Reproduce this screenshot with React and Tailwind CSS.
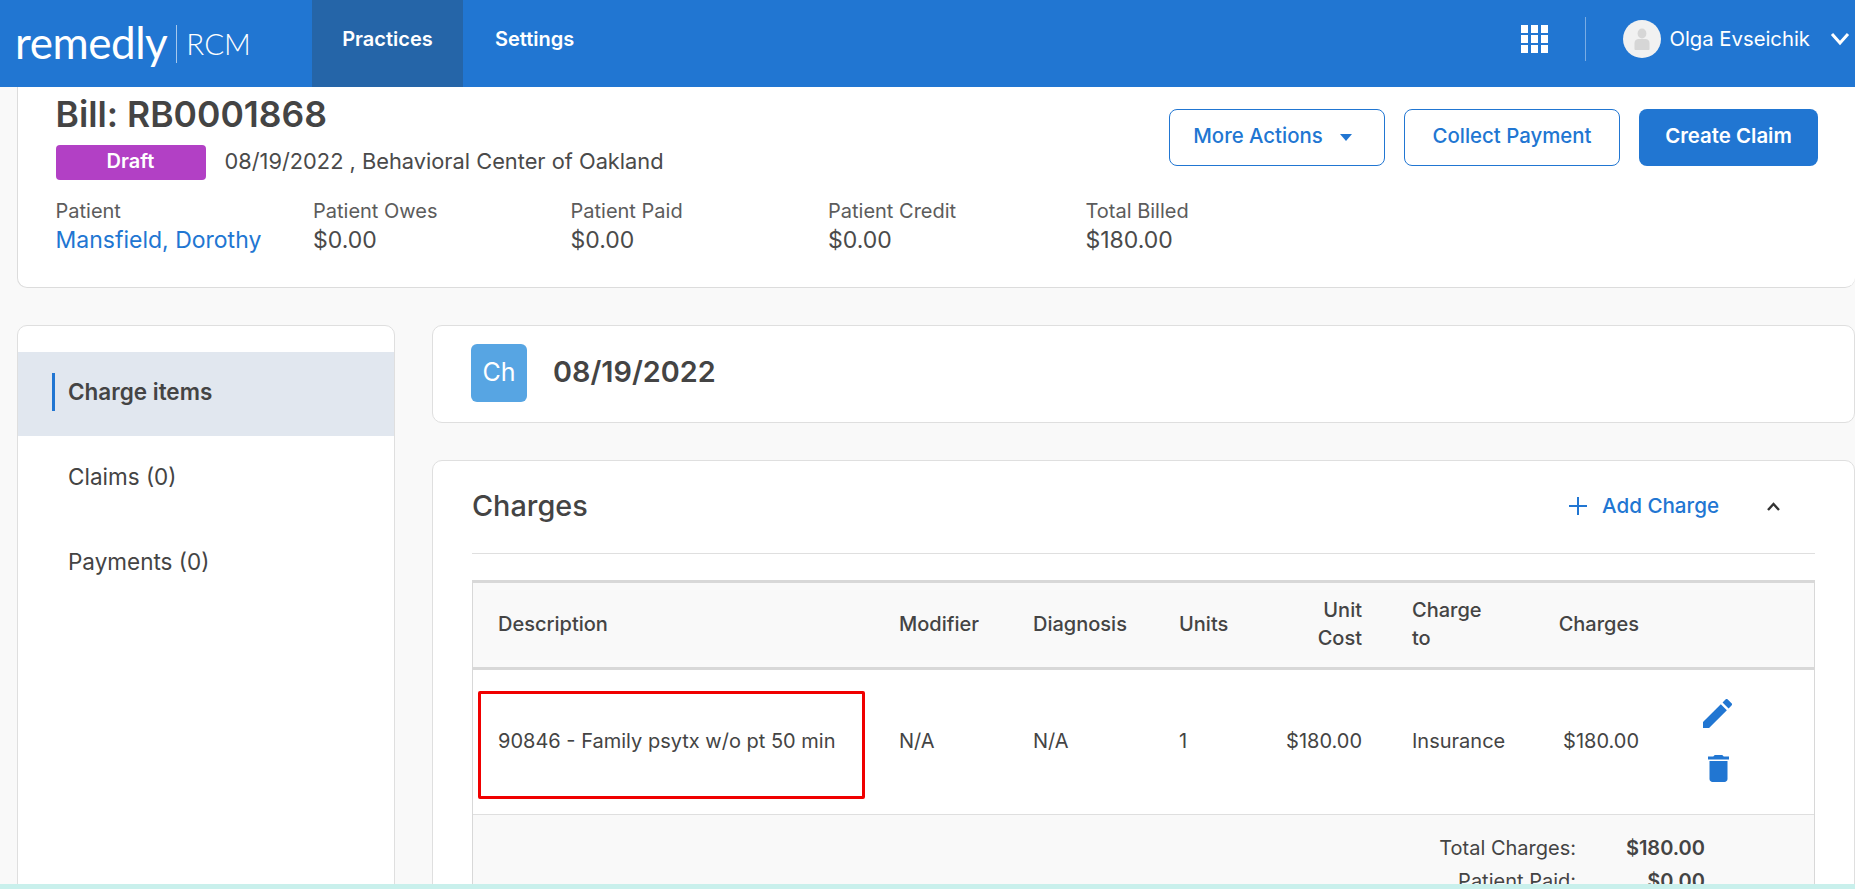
import React from "react";

const Summary = ({ label, value, link }) => (
  <div className="w-[257.5px]">
    <div className="text-[20px] leading-[30px] text-[#5c5c5c]">{label}</div>
    <div className={`text-[23px] leading-[29px] ${link ? "text-[#2176d2]" : "text-[#4a4a4a]"}`}>
      {value}
    </div>
  </div>
);

const rowGrid =
  "grid grid-cols-[401px_134px_146px_90px_93px_158px_119px_1fr] items-center pl-[25px] text-[20px] text-[#444]";

const App = () => {
  return (
    <div className="relative h-[889px] w-full overflow-hidden bg-[#f9f9f9] font-['Inter',sans-serif] text-[#444]">
      {/* top bar */}
      <header className="flex h-[87px] items-stretch bg-[#2176d2] text-white">
        <div className="flex w-[312px] items-center pl-[15px] font-['Lato',sans-serif]">
          <span className="pb-[3px] text-[44px] leading-none tracking-[-0.45px]">remedly</span>
          <span className="ml-[9px] h-[38px] w-px bg-white/60"></span>
          <span className="ml-[9px] text-[29.5px] font-light leading-none">RCM</span>
        </div>
        <div className="flex w-[151px] items-center justify-center bg-[#2565a8] pb-[9px] text-[20px] font-semibold">
          Practices
        </div>
        <div className="flex items-center pb-[9px] pl-[32px] text-[20px] font-semibold">Settings</div>
        <div className="ml-auto flex items-center pb-[9px]">
          <div className="grid grid-cols-3 gap-[2.5px]">
            {[...Array(9)].map((_, i) => (
              <span key={i} className="h-[7.5px] w-[7.5px] bg-white"></span>
            ))}
          </div>
          <span className="ml-[37px] h-[44px] w-px bg-white/40"></span>
          <div className="ml-[37px] flex h-[38px] w-[38px] items-center justify-center rounded-full bg-[#f1f1f1]">
            <svg width="16" height="22" viewBox="0 0 16 22" fill="#d6d6d6">
              <ellipse cx="8" cy="5.500" rx="4.400" ry="5" />
              <path d="M0.500 21v-6c0-2.600 2-4 4-4h7c2 0 4 1.400 4 4v6c0 .6-.4 1-1 1h-13c-.6 0-1-.4-1-1z" />
            </svg>
          </div>
          <span className="ml-[8px] mr-[2px] text-[20.3px]">Olga Evseichik</span>
          <svg className="ml-[18px] mr-[5px]" width="20" height="14" viewBox="0 0 20 14" fill="none" stroke="#fff" strokeWidth="3">
            <path d="M2 2l8 9 8-9" />
          </svg>
        </div>
      </header>

      {/* bill summary */}
      <section className="relative ml-[17px] h-[201px] rounded-b-[10px] border-b border-l border-[#dcdcdc] bg-white pl-[37.5px]">
        <div className="flex justify-between pr-[37px]">
          <div>
            <h1 className="pt-[6px] text-[35.500px] font-semibold leading-[44px] text-[#444]">Bill: RB0001868</h1>
            <div className="mt-[8px] flex items-center">
              <span className="flex h-[35px] w-[150px] items-center justify-center rounded-[4px] bg-[#b240c5] pb-[3px] text-[20px] font-semibold text-white">
                Draft
              </span>
              <span className="ml-[19px] pb-[2px] text-[21.8px] text-[#4a4a4a]">08/19/2022 , Behavioral Center of Oakland</span>
            </div>
          </div>
          <div className="flex gap-[19px] pt-[22px]">
            <button className="flex h-[57px] w-[216px] items-center justify-center rounded-[8px] border border-[#2176d2] bg-white pb-[3px] pr-[9px] text-[20.4px] font-medium text-[#2176d2]">
              More Actions
              <svg className="ml-[17px] mt-[3px]" width="12" height="7" viewBox="0 0 12 7" fill="#2176d2">
                <path d="M0 0h12L6 7z" />
              </svg>
            </button>
            <button className="h-[57px] w-[216px] rounded-[8px] border border-[#2176d2] bg-white pb-[3px] text-[20.4px] font-medium text-[#2176d2]">
              Collect Payment
            </button>
            <button className="h-[57px] w-[179px] rounded-[8px] bg-[#2176d2] pb-[3px] text-[20.4px] font-semibold text-white">
              Create Claim
            </button>
          </div>
        </div>
        <div className="mt-[16px] flex">
          <Summary label="Patient" value="Mansfield, Dorothy" link />
          <Summary label="Patient Owes" value="$0.00" />
          <Summary label="Patient Paid" value="$0.00" />
          <Summary label="Patient Credit" value="$0.00" />
          <Summary label="Total Billed" value="$180.00" />
        </div>
      </section>

      <div className="ml-[17px] mt-[37px] flex items-start gap-[37px]">
        {/* side menu */}
        <nav className="h-[620px] w-[378px] shrink-0 rounded-t-[10px] border border-[#dfdfdf] bg-white pt-[26px] text-[22.5px] text-[#444]">
          <div className="flex h-[84px] items-center bg-[#e1e7ef] pb-[4px] pl-[34px] font-semibold text-[#444]">
            <span className="h-[38px] w-[3px] bg-[#2176d2]"></span>
            <span className="ml-[13px]">Charge items</span>
          </div>
          <div className="flex h-[85px] items-center pb-[4px] pl-[50px]">Claims (0)</div>
          <div className="flex h-[85px] items-center pb-[4px] pl-[50px]">Payments (0)</div>
        </nav>

        <main className="min-w-0 flex-1">
          <div className="flex h-[98px] items-center rounded-[10px] border border-[#dfdfdf] bg-white pb-[2px] pl-[38px]">
            <span className="flex h-[58px] w-[56px] items-center justify-center rounded-[6px] bg-[#57a5e3] text-[25px] text-white">
              Ch
            </span>
            <span className="mb-[2px] ml-[26px] text-[28.8px] font-semibold text-[#444]">08/19/2022</span>
          </div>

          <div className="mt-[37px] rounded-t-[10px] border border-[#dfdfdf] bg-white pl-[39px] pr-[39px]">
            <div className="flex h-[93px] items-center border-b border-[#dfdfdf]">
              <h2 className="mb-[2px] text-[28.8px] font-medium text-[#444]">Charges</h2>
              <div className="mb-[1px] ml-auto flex items-center text-[20.6px] font-medium text-[#2176d2]">
                <svg width="18" height="18" viewBox="0 0 18 18" stroke="#2176d2" strokeWidth="2">
                  <path d="M9 0v18M0 9h18" />
                </svg>
                <span className="ml-[15px]">Add Charge</span>
              </div>
              <svg className="ml-[47px] mr-[34px]" width="15" height="10" viewBox="0 0 15 10" fill="none" stroke="#333" strokeWidth="2.400">
                <path d="M2 8l5.500-6 5.500 6" />
              </svg>
            </div>

            {/* charges table */}
            <div className="mt-[26px] border-x border-t-[3px] border-[#d8d8d8]">
              <div className={`${rowGrid} h-[87px] border-b-[3px] border-[#d8d8d8] bg-[#f9f9f9] pb-[2px] font-medium`}>
                <div>Description</div>
                <div>Modifier</div>
                <div>Diagnosis</div>
                <div>Units</div>
                <div className="text-right leading-[28px]">Unit<br />Cost</div>
                <div className="pl-[50px] leading-[28px]">Charge<br />to</div>
                <div className="text-right">Charges</div>
                <div></div>
              </div>
              <div className={`${rowGrid} relative h-[145px] border-b border-[#dfdfdf] bg-white pb-[2px]`}>
                <div className="whitespace-nowrap">90846 - Family psytx w/o pt 50 min</div>
                <div>N/A</div>
                <div>N/A</div>
                <div>1</div>
                <div className="text-right">$180.00</div>
                <div className="pl-[50px]">Insurance</div>
                <div className="text-right">$180.00</div>
                <div className="flex flex-col gap-[26px] pl-[64px]">
                  <svg width="29" height="29" viewBox="3 3 18 18" fill="#2176d2">
                    <path d="M3 17.250V21h3.750L17.810 9.940l-3.750-3.750L3 17.250zM20.710 7.040a1 1 0 0 0 0-1.410l-2.340-2.340a1 1 0 0 0-1.410 0l-1.830 1.830 3.750 3.750 1.830-1.830z" />
                  </svg>
                  <svg className="ml-[5px]" width="21" height="29" viewBox="5 3 14 18" fill="#2176d2">
                    <path d="M6 19c0 1.100.9 2 2 2h8c1.100 0 2-.9 2-2V7H6v12zM19 4h-3.500l-1-1h-5l-1 1H5v2h14V4z" />
                  </svg>
                </div>
                {/* red highlight box */}
                <div className="absolute left-[5px] top-[21px] h-[108px] w-[387px] rounded-[2px] border-[3px] border-[#f00000]"></div>
              </div>
              <div className="h-[120px] bg-[#f9f9f9] pt-[17px] text-[20px] leading-[33px]">
                <div className="grid grid-cols-[1fr_129px] pr-[109px]">
                  <div className="text-right">Total Charges:</div>
                  <div className="text-right font-semibold">$180.00</div>
                  <div className="text-right">Patient Paid:</div>
                  <div className="text-right font-semibold">$0.00</div>
                </div>
              </div>
            </div>
          </div>
        </main>
      </div>

      {/* strip along the bottom edge */}
      <div className="absolute bottom-0 left-0 h-[5px] w-full bg-[#c9f0ec]"></div>
    </div>
  );
};

export default App;
